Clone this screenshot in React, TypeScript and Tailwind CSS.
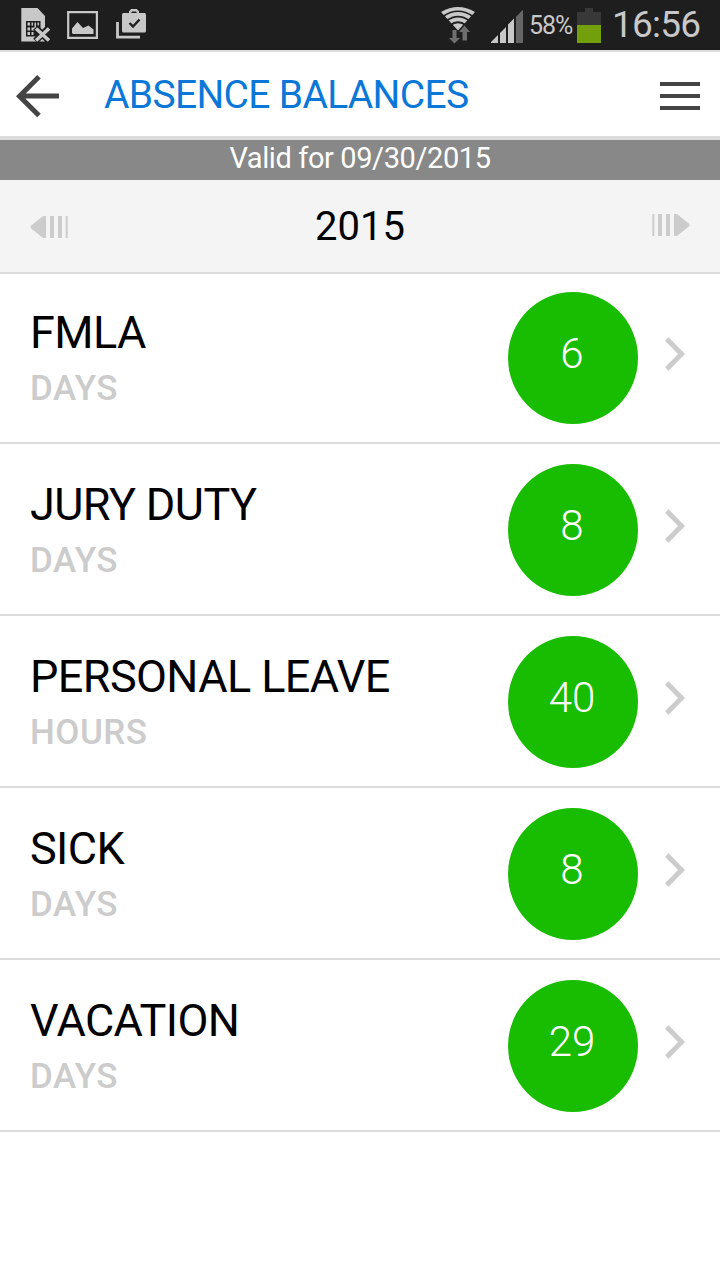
type Balance = {
  name: string;
  unit: string;
  value: number;
};

const balances: Balance[] = [
  { name: "FMLA", unit: "DAYS", value: 6 },
  { name: "JURY DUTY", unit: "DAYS", value: 8 },
  { name: "PERSONAL LEAVE", unit: "HOURS", value: 40 },
  { name: "SICK", unit: "DAYS", value: 8 },
  { name: "VACATION", unit: "DAYS", value: 29 },
];

function SimErrorIcon() {
  return (
    <svg className="w-[30px] h-9" viewBox="0 0 30 36" fill="#c8c8c8">
      <path d="M1.3 2H17.500l7.500 8v25.500H1.3z" />
      <path d="M6 15h14.500v15.500H6z" fill="#1e1e1e" />
      <path d="M7.500 16.500H10v3H7.500zM7.500 21.500H10v3H7.500zM7.500 26H10v3H7.500zM11.500 16.500h1.500v3h-1.500zM11.500 21.500H15v3h-3.500zM11.500 26h2v3h-2zM14.500 16.500H16v8h-1.500zM17.500 16.500H19v3h-1.500z" />
      <path d="M15.500 21.500 29 35M29 21.500 15.500 35" stroke="#1e1e1e" strokeWidth="6.500" />
      <path d="M16 22.500 29 34.500M29 22.500 16 34.500" stroke="#c8c8c8" strokeWidth="3.600" />
    </svg>
  );
}

function PictureIcon() {
  return (
    <svg className="ml-4 w-8 h-9" viewBox="0 0 32 36">
      <path d="M2.200 6.100h28.700v25.800H2.200z" fill="none" stroke="#c8c8c8" strokeWidth="2.200" />
      <path d="M6 27v-4.500L11.500 16l5.500 6 5.500-2.500 5 4V28H7z" fill="#c8c8c8" />
    </svg>
  );
}

function WorkIcon() {
  return (
    <svg className="ml-[18px] w-8 h-9" viewBox="0 0 32 36">
      <path d="M1.500 16v15.100h22.500" fill="none" stroke="#c8c8c8" strokeWidth="2.800" />
      <rect x="6" y="7" width="24" height="19.500" rx="1.500" fill="#c8c8c8" />
      <path d="M14.200 8V5.700l1.500-1.500h4.600l1.500 1.500V8" fill="none" stroke="#c8c8c8" strokeWidth="2.400" />
      <path d="m13.500 17 3.500 3.500 6.500-7" fill="none" stroke="#1e1e1e" strokeWidth="2.400" />
    </svg>
  );
}

function WifiIcon() {
  return (
    <svg className="w-9 h-10" viewBox="0 0 36 40">
      <path d="M0 8Q17-2 34 8L17 26.500z" fill="#c8c8c8" />
      <g fill="none" stroke="#1e1e1e" strokeWidth="1.700">
        <path d="M2 12.500Q17 2 32 12.500" />
        <path d="M5.500 16.800Q17 8.500 28.500 16.800" />
        <path d="M9 21.500Q17 15 25 21.500" />
      </g>
      <path d="M11.500 26h4v8H19l-5.500 5.500L8 34h3.500z" fill="#6e6e6e" />
      <path d="M21.500 36.500V28H18l5.500-6.500L29 28h-3v8.500z" fill="#6e6e6e" />
    </svg>
  );
}

function SignalIcon() {
  return (
    <svg className="w-[34px] h-[34px]" viewBox="0 0 34 34">
      <path d="M-1 34 7 26v8zM9 24l6-6v16H9zM17 15.500l6-6V34h-6z" fill="#c8c8c8" />
      <path d="m25 8 7-7.500V34h-7z" fill="#666" />
    </svg>
  );
}

function StatusBar() {
  return (
    <div className="h-[50px] bg-[#1e1e1e] flex items-start pl-5 text-[#c8c8c8]">
      <div className="flex pt-[6px]">
        <SimErrorIcon />
        <PictureIcon />
        <WorkIcon />
      </div>
      <div className="ml-auto flex items-start pr-5">
        <div className="pt-1 mr-[14px]">
          <WifiIcon />
        </div>
        <div className="pt-[9px]">
          <SignalIcon />
        </div>
        <span className="ml-1 w-12 text-[25px] leading-[52px] tracking-[-1px] whitespace-nowrap">58%</span>
        <div className="pt-2 flex flex-col items-center">
          <div className="w-2 h-1 bg-[#383838]" />
          <div className="w-6 h-[13px] bg-[#383838]" />
          <div className="w-6 h-[18px] bg-[#729f0b]" />
        </div>
        <span className="ml-[11px] w-[88px] text-[37px] leading-[50px] tracking-[-0.8px] whitespace-nowrap">16:56</span>
      </div>
    </div>
  );
}

function Header() {
  return (
    <header className="h-[90px] border-t-2 border-b-4 border-[#dcdcdc] flex items-center pl-4 pr-5">
      <svg className="mt-1 w-11 h-11" viewBox="0 0 44 44" fill="none" stroke="#444" strokeWidth="5">
        <path d="M43 22H4M23 2.800 3.500 22.300 23 41.500" />
      </svg>
      <h1 className="ml-11 pt-[2px] text-[39px] leading-[82px] tracking-[-0.67px] text-[#0b78d8] whitespace-nowrap">
        ABSENCE BALANCES
      </h1>
      <button className="ml-auto mt-1 flex flex-col gap-2">
        <span className="w-10 h-1 bg-[#444]" />
        <span className="w-10 h-1 bg-[#444]" />
        <span className="w-10 h-1 bg-[#444]" />
      </button>
    </header>
  );
}

function YearArrow({ className }: { className: string }) {
  return (
    <svg className={className} viewBox="0 0 38 22" fill="#ccc">
      <path d="M.500 11Q.500 10 1.500 9.300L12.500.600Q13.300 0 14.300 0H16v22h-1.700q-1 0-1.800-.600L1.500 12.700Q.500 12 .500 11zM20 0h4v22h-4zM28 0h4v22h-4zM35.700 0h2v22h-2z" />
    </svg>
  );
}

function BalanceRow({ name, unit, value }: Balance) {
  return (
    <li className="h-[172px] border-b-2 first:border-t-2 border-[#dcdcdc] flex items-end pl-[30px]">
      <div className="flex-1 pb-[33px] whitespace-nowrap">
        <div className="text-[45px] leading-[52px] tracking-[-0.6px] text-black">{name}</div>
        <div className="mt-[10px] text-[35px] leading-10 font-medium tracking-[0.5px] text-[#ccc]">{unit}</div>
      </div>
      <div className="mb-[18px] w-[130px] h-[132px] pr-[2px] rounded-[50%] bg-[#18bc00] text-white text-center text-[42px] leading-[124px] font-light">
        {value}
      </div>
      <svg
        className="ml-[26px] mr-[34px] mb-[70px] w-[22px] h-9"
        viewBox="0 0 22 36"
        fill="none"
        stroke="#ccc"
        strokeWidth="5"
      >
        <path d="M2.800 3 17.500 18 2.800 33" />
      </svg>
    </li>
  );
}

export default function App() {
  return (
    <main className="w-[720px] h-[1280px] bg-white overflow-hidden font-[Roboto,sans-serif]">
      <StatusBar />
      <Header />
      <div className="h-10 bg-[#888] text-white text-center text-[29px] leading-9 tracking-[-0.4px]">
        Valid for 09/30/2015
      </div>
      <div className="h-[92px] bg-[#f4f4f4] flex items-center justify-between px-[30px]">
        <YearArrow className="mt-[2px] w-[38px] h-[22px]" />
        <span className="pt-[2px] text-[40px] leading-[90px] text-black">2015</span>
        <YearArrow className="-mt-[2px] w-[38px] h-[22px] -scale-x-100" />
      </div>
      <ul>
        {balances.map((balance) => (
          <BalanceRow key={balance.name} {...balance} />
        ))}
      </ul>
    </main>
  );
}
